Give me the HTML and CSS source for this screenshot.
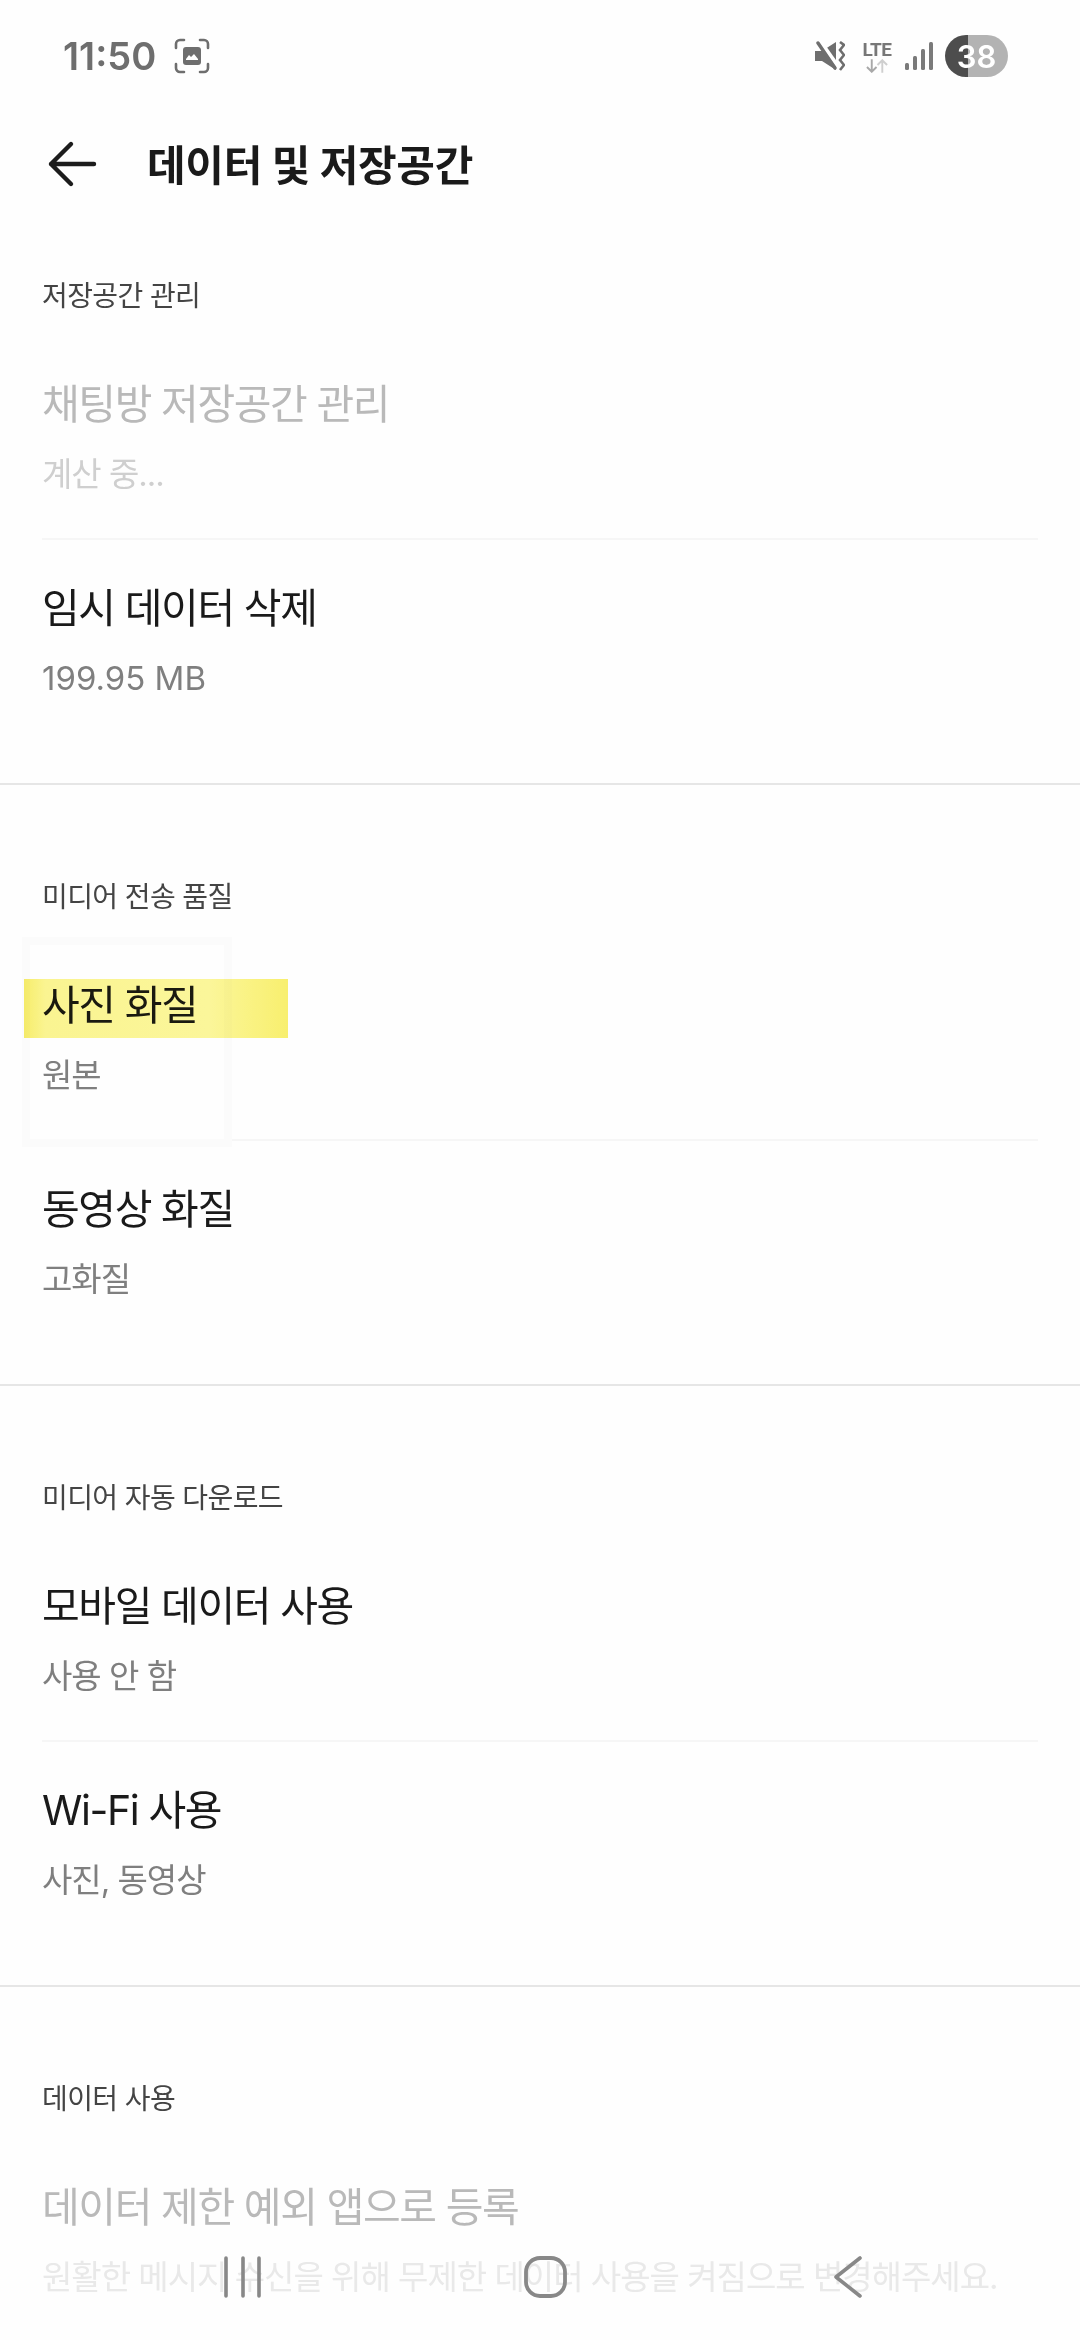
FILE: index.html
```html
<!DOCTYPE html>
<html lang="ko">

<head>
  <meta charset="UTF-8">
  <meta name="viewport" content="width=device-width, initial-scale=1.0">
  <title>데이터 및 저장공간</title>

  <link rel="stylesheet" href="styles.css">
</head>

<body>
  <div class="statusbar">
    <div class="status-left">
      <span class="time">11:50</span>
      <svg class="shot" width="36" height="36" viewBox="0 0 36 36" fill="none">
        <path d="M2 10V6a4 4 0 0 1 4-4h4M26 2h4a4 4 0 0 1 4 4v4M34 26v4a4 4 0 0 1-4 4h-4M10 34H6a4 4 0 0 1-4-4v-4" stroke="#6e6e6e" stroke-width="2.6" stroke-linecap="round"/>
        <path d="M12 9h12a3 3 0 0 1 3 3v12a3 3 0 0 1-3 3H12a3 3 0 0 1-3-3V12a3 3 0 0 1 3-3z" fill="#6e6e6e"/>
        <path d="M12 21l3-4 2 2 3-3 4 5v1H12z" fill="#fff"/>
      </svg>
    </div>
    <div class="status-right">
      <svg class="mute" width="30" height="30" viewBox="0 0 30 30" fill="none">
        <path d="M0 10h7l14-9v28l-14-9H0z" fill="#6e6e6e"/>
        <path d="M5 0l17 24" stroke="#fff" stroke-width="4"/>
        <path d="M3 2l17 25" stroke="#6e6e6e" stroke-width="3.400" stroke-linecap="round"/>
        <path d="M25 1l4 3-4 5 4 5-4 5 4 5-4 5" stroke="#6e6e6e" stroke-width="2.600"/>
      </svg>
      <div class="lte">
        <span class="lte-text">LTE</span>
        <svg width="23" height="14" viewBox="0 0 24 14" fill="none">
          <path d="M6 0v12M1 8l5 5 5-5" stroke="#a8a8a8" stroke-width="2"/>
          <path d="M17 14V2M12 6l5-5 5 5" stroke="#cfcfcf" stroke-width="2"/>
        </svg>
      </div>
      <svg class="signal" width="28" height="30" viewBox="0 0 28 30">
        <rect x="0" y="22" width="4" height="7" rx="1.500" fill="#7a7a7a"/>
        <rect x="8" y="15" width="4" height="14" rx="1.500" fill="#7a7a7a"/>
        <rect x="16" y="8" width="4" height="21" rx="1.500" fill="#7a7a7a"/>
        <rect x="24" y="1" width="4" height="28" rx="1.500" fill="#7a7a7a"/>
      </svg>
      <div class="battery"><span>38</span></div>
    </div>
  </div>

  <div class="appbar">
    <svg class="back" width="52" height="52" viewBox="0 0 52 52" fill="none">
      <path d="M47 26H4M24 6L4 26l20 20" stroke="#1c1c1c" stroke-width="4.400" stroke-linecap="round" stroke-linejoin="round"/>
    </svg>
    <h1>데이터 및 저장공간</h1>
  </div>

  <div class="section first">
    <div class="label">저장공간 관리</div>
    <div class="row disabled">
      <div class="title">채팅방 저장공간 관리</div>
      <div class="sub">계산 중...</div>
    </div>
    <div class="row">
      <div class="title">임시 데이터 삭제</div>
      <div class="sub num">199.95 MB</div>
    </div>
  </div>

  <div class="section">
    <div class="label">미디어 전송 품질</div>
    <div class="row">
      <div class="title">사진 화질</div>
      <div class="sub">원본</div>
      <div class="touch-box"></div>
      <div class="marker"></div>
    </div>
    <div class="row">
      <div class="title">동영상 화질</div>
      <div class="sub">고화질</div>
    </div>
  </div>

  <div class="section">
    <div class="label">미디어 자동 다운로드</div>
    <div class="row">
      <div class="title">모바일 데이터 사용</div>
      <div class="sub">사용 안 함</div>
    </div>
    <div class="row">
      <div class="title">Wi-Fi 사용</div>
      <div class="sub">사진, 동영상</div>
    </div>
  </div>

  <div class="section last">
    <div class="label">데이터 사용</div>
    <div class="row disabled">
      <div class="title">데이터 제한 예외 앱으로 등록</div>
      <div class="sub">원활한 메시지 수신을 위해 무제한 데이터 사용을 켜짐으로 변경해주세요.</div>
    </div>
  </div>

  <div class="navbar">
    <svg width="42" height="42" viewBox="0 0 42 42" fill="none">
      <path d="M4 2v38M21 2v38M37 2v38" stroke="#888" stroke-width="3.600" stroke-linecap="round"/>
    </svg>
    <svg class="nav-home" width="43" height="42" viewBox="0 0 43 42" fill="none">
      <rect x="2" y="2" width="39" height="38" rx="14" stroke="#888" stroke-width="3.800"/>
    </svg>
    <svg class="nav-back" width="28" height="42" viewBox="0 0 28 42" fill="none">
      <path d="M26 2L2 21l24 19" stroke="#888" stroke-width="3.600" stroke-linecap="round" stroke-linejoin="round"/>
    </svg>
  </div>
</body>

</html>
```

FILE: styles.css
```css
* {
  margin: 0;
  padding: 0;
  box-sizing: border-box;
}

html,
body {
  height: 2340px;
  overflow: hidden;
}

body {
  position: relative;
  background-color: #fefefe;
  font-family: Inter, "Noto Sans CJK KR", sans-serif;
  color: #1a1a1a;
}

.statusbar {
  height: 112px;
  padding: 0 72px 0 63px;
  display: flex;
  align-items: center;
  justify-content: space-between;
}

.status-left,
.status-right {
  display: flex;
  align-items: center;
}

.time {
  font-size: 38px;
  font-weight: 600;
  color: #6e6e6e;
}

.shot {
  margin-left: 18px;
}

.mute {
  margin-right: 17px;
}

.signal {
  margin: 0 12px 0 13px;
}

.lte {
  width: 30px;
  display: flex;
  flex-direction: column;
  align-items: center;
}

.lte-text {
  font-family: Roboto, sans-serif;
  font-size: 19px;
  font-weight: 700;
  line-height: 19px;
  letter-spacing: -0.5px;
  color: #777;
}

.battery {
  width: 63px;
  height: 42px;
  border-radius: 21px;
  background: linear-gradient(to right, #4d4d4d 0, #4d4d4d 23px, #b3b3b3 23px);
  display: flex;
  align-items: center;
  justify-content: center;
  font-size: 31px;
  font-weight: 600;
  color: #fff;
}

.appbar {
  height: 104px;
  padding-left: 47px;
  display: flex;
  align-items: center;
}

.appbar h1 {
  margin-left: 48px;
  margin-top: -3px;
  font-size: 42px;
  font-weight: 700;
  letter-spacing: -0.3px;
  color: #1a1a1a;
}

.section {
  height: 601px;
  padding-top: 66px;
  border-bottom: 2px solid #e6e6e6;
}

.section.first {
  height: 569px;
  padding-top: 34px;
}

.section.last {
  height: 353px;
  border-bottom: none;
}

.label {
  height: 86px;
  padding-left: 42px;
  padding-top: 26px;
  font-size: 28px;
  line-height: 40px;
  letter-spacing: -0.6px;
  color: #444;
}

.row {
  position: relative;
  height: 204px;
  margin: 0 42px;
  padding-top: 37px;
  border-bottom: 2px solid #f6f6f6;
}

.row:last-child {
  border-bottom: none;
}

.last .row {
  height: 190px;
}

.title {
  font-size: 41px;
  line-height: 62px;
  letter-spacing: -1.400px;
  color: #1a1a1a;
}

.sub {
  margin-top: 8px;
  font-size: 33px;
  line-height: 62px;
  letter-spacing: -1px;
  color: #7f7f7f;
  white-space: nowrap;
}

.sub.num {
  letter-spacing: 0;
}

.disabled .title {
  color: #b9b9b9;
}

.disabled .sub {
  color: #cfcfcf;
}

.last .disabled .sub {
  color: #e9e9e9;
}

/* 高亮层 盖在文字上面 */
.touch-box {
  position: absolute;
  left: -20px;
  top: 0;
  width: 210px;
  height: 210px;
  border: 8px solid #fbfbfb;
}

.marker {
  position: absolute;
  left: -18px;
  top: 42px;
  width: 264px;
  height: 59px;
  background: linear-gradient(to right, #f8ee6a, #fbf592 8%, #fcf79b 70%, #f9f06e);
  mix-blend-mode: multiply;
}

.navbar {
  position: absolute;
  left: 222px;
  top: 2256px;
  display: flex;
  align-items: center;
}

.nav-home {
  margin-left: 260px;
}

.nav-back {
  margin-left: 267px;
}
```
